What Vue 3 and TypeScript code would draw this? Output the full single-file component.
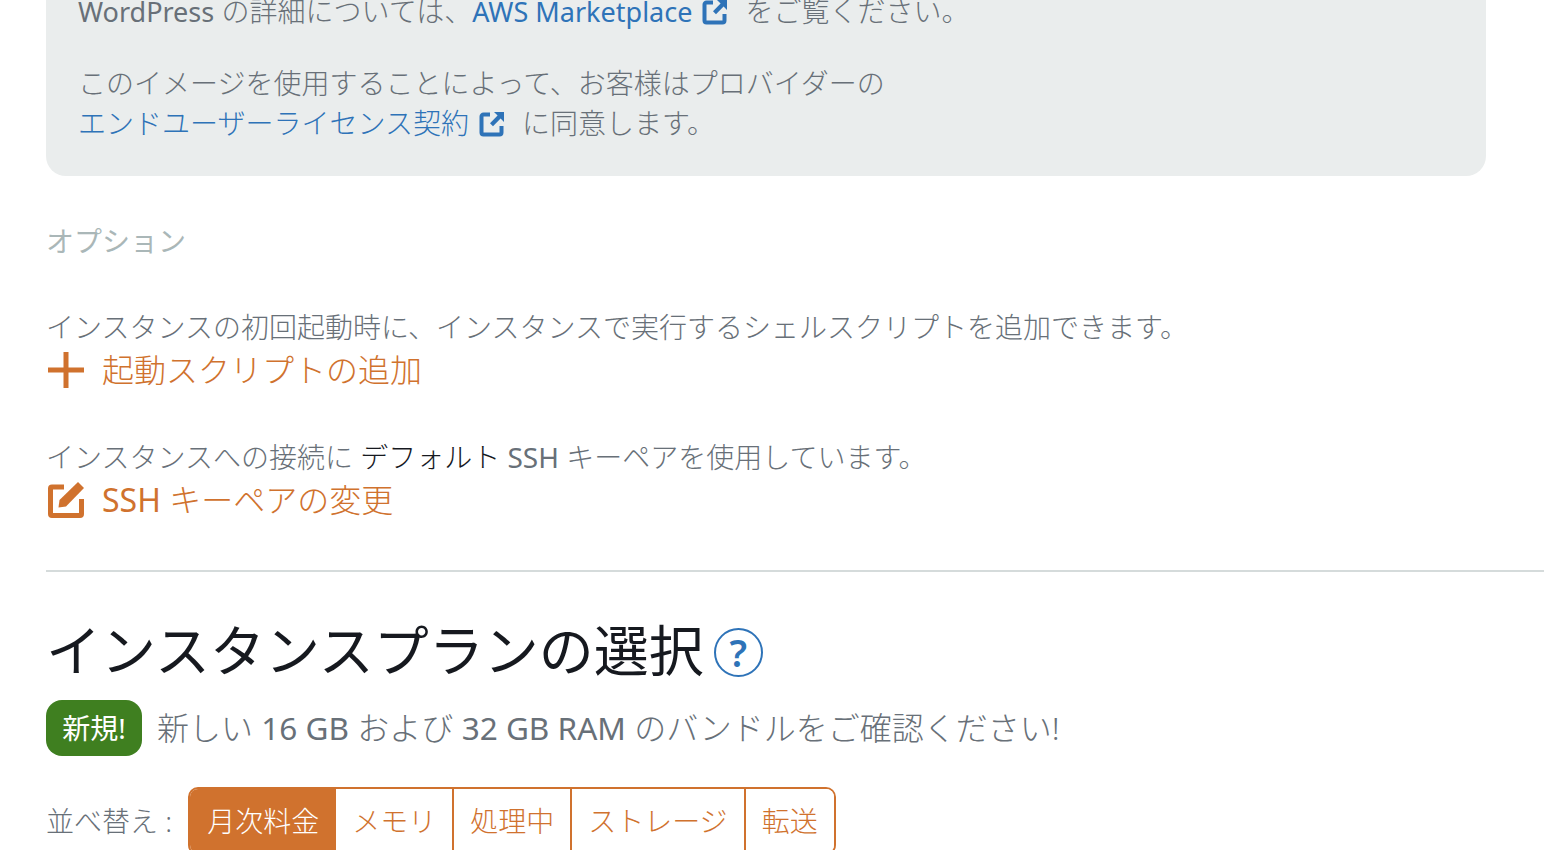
<script setup lang="ts">
const sortOptions = ['月次料金', 'メモリ', '処理中', 'ストレージ', '転送'];
const activeSort = '月次料金';
</script>

<template>
  <div class="page">
    <div class="blueprint-info">
      <p class="info-line">
        <span class="latin">WordPress</span> の詳細については、<a class="ext-link"><span class="latin">AWS Marketplace</span><svg class="ext-icon" viewBox="0 0 26 26"><path d="M11 3.500H4.500a2 2 0 0 0-2 2v16a2 2 0 0 0 2 2h16a2 2 0 0 0 2-2V15" fill="none" stroke="currentColor" stroke-width="4"/><path d="M15 1h10v10l-3.400-3.400-7.600 7.600-3-3 7.600-7.600z" fill="currentColor"/></svg></a>をご覧ください。
      </p>
      <p class="info-line agree">
        このイメージを使用することによって、お客様はプロバイダーの<br />
        <a class="ext-link">エンドユーザーライセンス契約<svg class="ext-icon" viewBox="0 0 26 26"><path d="M11 3.500H4.500a2 2 0 0 0-2 2v16a2 2 0 0 0 2 2h16a2 2 0 0 0 2-2V15" fill="none" stroke="currentColor" stroke-width="4"/><path d="M15 1h10v10l-3.400-3.400-7.600 7.600-3-3 7.600-7.600z" fill="currentColor"/></svg></a>に同意します。
      </p>
    </div>

    <div class="options-title">オプション</div>

    <div class="option">
      <p>インスタンスの初回起動時に、インスタンスで実行するシェルスクリプトを追加できます。</p>
      <a class="action">
        <svg class="action-icon" viewBox="0 0 36 36"><path d="M15.500 0h5v15.500H36v5H20.500V36h-5V20.500H0v-5h15.500z" fill="currentColor"/></svg>
        <span>起動スクリプトの追加</span>
      </a>
    </div>

    <div class="option second">
      <p>インスタンスへの接続に <span class="dark">デフォルト</span> <span class="latin wide">SSH</span> キーペアを使用しています。</p>
      <a class="action">
        <svg class="action-icon" viewBox="0 0 36 36">
          <path d="M16 5H4a1.500 1.500 0 0 0-1.500 1.500V32A1.500 1.500 0 0 0 4 33.500h28a1.500 1.500 0 0 0 1.500-1.500V17" fill="none" stroke="currentColor" stroke-width="5" stroke-linejoin="round"/>
          <path d="M30 0L36 6 18 24.500l-7.500 1 1-7.500z" fill="currentColor"/>
        </svg>
        <span><span class="latin wide">SSH</span> キーペアの変更</span>
      </a>
    </div>

    <hr class="divider" />

    <h2 class="plan-title">
      インスタンスプランの選択
      <span class="help">?</span>
    </h2>

    <div class="news">
      <span class="badge">新規!</span>
      <span class="news-text">新しい <span class="latin mid">16 GB</span> および <span class="latin mid">32 GB RAM</span> のバンドルをご確認ください!</span>
    </div>

    <div class="sort">
      <span class="sort-label">並べ替え :</span>
      <div class="sort-group">
        <button
          v-for="opt in sortOptions"
          :key="opt"
          class="sort-btn"
          :class="{ active: opt === activeSort }"
        >
          {{ opt }}
        </button>
      </div>
    </div>
  </div>
</template>

<style>
html,
body {
  margin: 0;
  background: #fff;
  overflow: hidden;
}
</style>

<style scoped>
.page {
  height: 850px;
  overflow: hidden;
  box-sizing: border-box;
  padding-left: 46px;
  font-family: "Noto Sans", "Noto Sans CJK JP", sans-serif;
  font-size: 28px;
  font-weight: 300;
  line-height: 40px;
  color: #687078;
}

p {
  margin: 0;
}

.latin {
  font-size: 0.965em;
  font-weight: 400;
}

.latin.wide {
  font-size: 1em;
}

.latin.mid {
  font-size: 0.985em;
}

.blueprint-info {
  width: 1440px;
  box-sizing: border-box;
  margin-top: -9px;
  padding: 0 32px 32px 32px;
  height: 185px;
  background: #eaeded;
  border-radius: 0 0 20px 20px;
}

.agree {
  margin-top: 31px;
}

.ext-link {
  color: #2e73b8;
}

.ext-icon {
  width: 26px;
  height: 26px;
  margin: 0 17px 0 10px;
  vertical-align: -3px;
}

.options-title {
  margin-top: 45px;
  font-weight: 400;
  color: #aab7b8;
}

.option {
  margin-top: 46px;
}

.option.second {
  margin-top: 47px;
}

.dark {
  color: #16191f;
}

.action {
  display: flex;
  align-items: center;
  gap: 18px;
  margin-top: 3px;
  font-size: 32px;
  color: #d0722e;
}

.action-icon {
  width: 36px;
  height: 36px;
  margin-left: 2px;
}

.divider {
  margin: 50px 0 0;
  border: 0;
  border-top: 2px solid #d5dbdb;
}

.plan-title {
  display: flex;
  align-items: center;
  margin: 42px 0 0;
  font-size: 55px;
  font-weight: 400;
  line-height: 72px;
  color: #16191f;
}

.help {
  width: 45px;
  height: 45px;
  margin: 4px 0 0 10px;
  border: 2px solid #2e73b8;
  border-radius: 50%;
  display: flex;
  align-items: center;
  justify-content: center;
  font-size: 38px;
  font-weight: 600;
  line-height: 1;
  color: #2e73b8;
}

.news {
  display: flex;
  align-items: center;
  gap: 15px;
  margin-top: 14px;
}

.badge {
  width: 96px;
  height: 56px;
  border-radius: 16px;
  background: #3f7f20;
  color: #fff;
  font-size: 28px;
  font-weight: 400;
  line-height: 56px;
  text-align: center;
}

.news-text {
  font-size: 32px;
}

.sort {
  display: flex;
  align-items: center;
  gap: 16px;
  margin-top: 31px;
}

.sort-group {
  display: flex;
  border: 2px solid #d0722e;
  border-radius: 10px;
  overflow: hidden;
  height: 64px;
  flex: none;
}

.sort-btn {
  border: 0;
  border-left: 2px solid #d0722e;
  background: #fff;
  padding: 0 16px;
  font: inherit;
  color: #d0722e;
}

.sort-btn:first-child {
  border-left: 0;
  padding: 0 15px 0 17px;
}

.sort-btn.active {
  background: #d0722e;
  color: #fff;
}

.sort-label {
  flex: none;
}
</style>
